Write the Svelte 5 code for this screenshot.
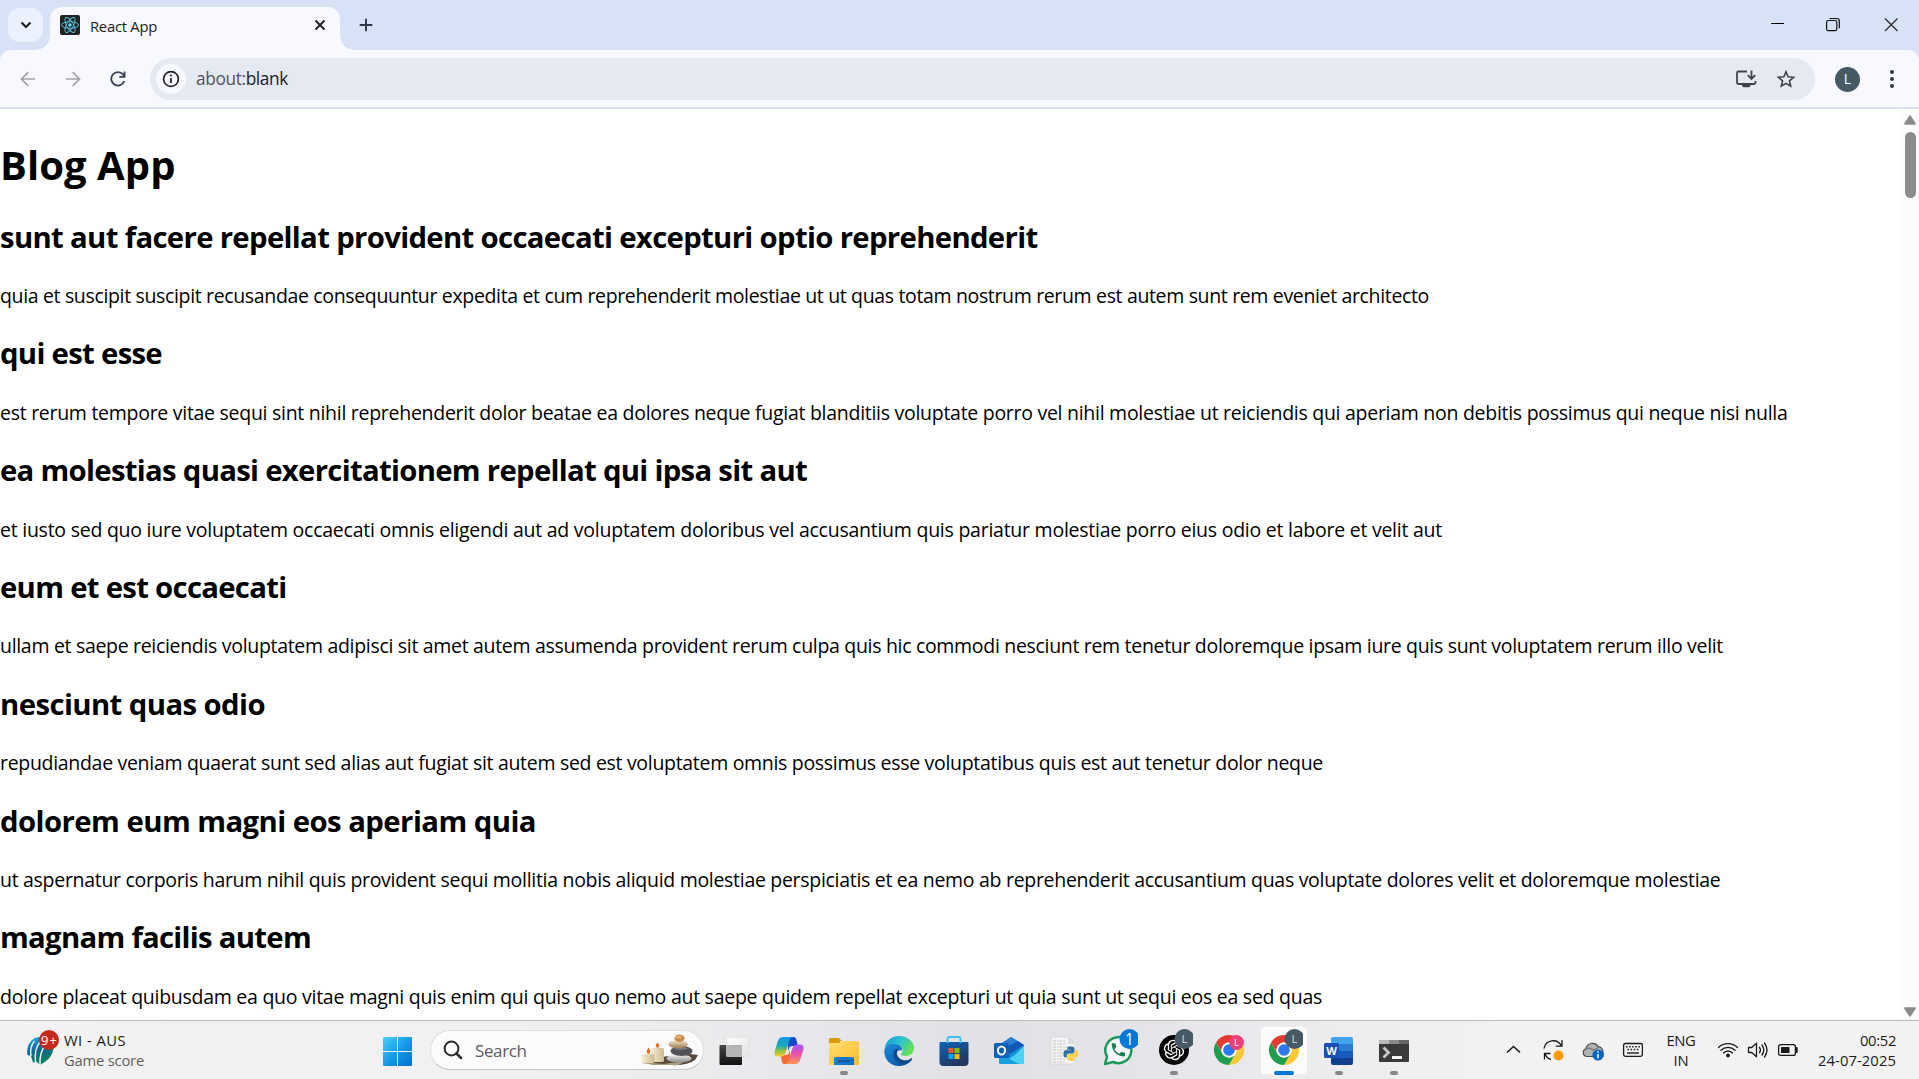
<script>
  const posts = [
    { title: 'sunt aut facere repellat provident occaecati excepturi optio reprehenderit', tw: 1037.5, body: 'quia et suscipit suscipit recusandae consequuntur expedita et cum reprehenderit molestiae ut ut quas totam nostrum rerum est autem sunt rem eveniet architecto', bw: 1429 },
    { title: 'qui est esse', tw: 162, body: 'est rerum tempore vitae sequi sint nihil reprehenderit dolor beatae ea dolores neque fugiat blanditiis voluptate porro vel nihil molestiae ut reiciendis qui aperiam non debitis possimus qui neque nisi nulla', bw: 1787.5 },
    { title: 'ea molestias quasi exercitationem repellat qui ipsa sit aut', tw: 807, body: 'et iusto sed quo iure voluptatem occaecati omnis eligendi aut ad voluptatem doloribus vel accusantium quis pariatur molestiae porro eius odio et labore et velit aut', bw: 1442 },
    { title: 'eum et est occaecati', tw: 286.5, body: 'ullam et saepe reiciendis voluptatem adipisci sit amet autem assumenda provident rerum culpa quis hic commodi nesciunt rem tenetur doloremque ipsam iure quis sunt voluptatem rerum illo velit', bw: 1723 },
    { title: 'nesciunt quas odio', tw: 265, body: 'repudiandae veniam quaerat sunt sed alias aut fugiat sit autem sed est voluptatem omnis possimus esse voluptatibus quis est aut tenetur dolor neque', bw: 1323 },
    { title: 'dolorem eum magni eos aperiam quia', tw: 536, body: 'ut aspernatur corporis harum nihil quis provident sequi mollitia nobis aliquid molestiae perspiciatis et ea nemo ab reprehenderit accusantium quas voluptate dolores velit et doloremque molestiae', bw: 1720.5 },
    { title: 'magnam facilis autem', tw: 311, body: 'dolore placeat quibusdam ea quo vitae magni quis enim qui quis quo nemo aut saepe quidem repellat excepturi ut quia sunt ut sequi eos ea sed quas', bw: 1322 }
  ];

  // Tracks a line of text so that it runs to the given width.
  function fit(node, width) {
    const natural = node.getBoundingClientRect().width;
    node.style.letterSpacing = `${(width - natural) / node.textContent.length}px`;
  }
</script>

{#snippet chromeLogo()}
  <circle cx="24" cy="24" r="24" fill="#fff" />
  <path d="M3.2 12A24 24 0 0 1 44.8 12H24A12 12 0 0 0 13.6 30Z" fill="#e33b2e" />
  <path d="M44.8 12A24 24 0 0 1 24 48L34.4 30A12 12 0 0 0 24 12Z" fill="#fcc934" />
  <path d="M24 48A24 24 0 0 1 3.2 12L13.6 30A12 12 0 0 0 34.4 30Z" fill="#1e9e4a" />
  <circle cx="24" cy="24" r="12" fill="#fff" />
  <circle cx="24" cy="24" r="9.3" fill="#2c78ee" />
{/snippet}

<div class="screen">
  <header class="tabs">
    <button class="tabsearch" aria-label="Search tabs">
      <svg width="12" height="8" viewBox="0 0 12 8"><path d="M1.5 1.5 6 6l4.500-4.500" fill="none" stroke="#1f2024" stroke-width="2.200" /></svg>
    </button>
    <div class="tab">
      <svg class="fav" width="20" height="20" viewBox="0 0 20 20">
        <rect width="20" height="20" rx="2" fill="#222" />
        <g fill="none" stroke="#58c4dc" stroke-width="0.9">
          <ellipse cx="10" cy="10" rx="8.500" ry="3.300" />
          <ellipse cx="10" cy="10" rx="8.500" ry="3.300" transform="rotate(60 10 10)" />
          <ellipse cx="10" cy="10" rx="8.500" ry="3.300" transform="rotate(120 10 10)" />
        </g>
        <circle cx="10" cy="10" r="1.700" fill="#61dafb" />
      </svg>
      <span class="tabname"><span use:fit={67}>React App</span></span>
      <svg class="tabclose" width="12" height="12" viewBox="0 0 12 12"><path d="M1.500 1.500l9 9M10.500 1.500l-9 9" stroke="#1f2024" stroke-width="1.900" /></svg>
    </div>
    <svg class="plus" width="14" height="14" viewBox="0 0 14 14"><path d="M7 .7v12.600M.7 7h12.600" stroke="#30394a" stroke-width="1.900" /></svg>
    <div class="win">
      <svg width="58" height="50" viewBox="0 0 58 50"><path d="M23 23.500h13" stroke="#000" /></svg>
      <svg width="58" height="50" viewBox="0 0 58 50"><g fill="none" stroke="#111" stroke-width="1.200"><rect x="20.600" y="20.500" width="10.200" height="10.200" rx="1.800" /><path d="M23.600 18.500h7.200a2.500 2.500 0 0 1 2.500 2.500v7.300" /></g></svg>
      <svg width="55" height="50" viewBox="0 0 55 50"><path d="M21 18.500l12.500 12.500M33.500 18.500l-12.500 12.500" stroke="#222" stroke-width="1.100" /></svg>
    </div>
  </header>

  <div class="toolbar">
    <div class="nav">
      <svg width="16" height="16" viewBox="0 0 16 16"><path d="M15 8H2M8.300 1.200 1.500 8l6.800 6.800" fill="none" stroke="#a1a3a9" stroke-width="1.700" /></svg>
      <svg width="16" height="16" viewBox="0 0 16 16"><path d="M1 8h13M7.700 1.200 14.500 8l-6.800 6.800" fill="none" stroke="#a1a3a9" stroke-width="1.700" /></svg>
      <svg width="16" height="16" viewBox="0 0 16 16"><path d="M14.300 10A6.700 6.700 0 1 1 13.200 3.700L14.500 5.500" fill="none" stroke="#3a4456" stroke-width="1.900" /><path d="M15.500.5v6.200H9.300V4.900h4.300V.5Z" fill="#3a4456" /></svg>
    </div>
    <div class="omnibox">
      <span class="info">
        <svg width="18" height="18" viewBox="0 0 18 18"><circle cx="9" cy="9" r="7.400" fill="none" stroke="#202124" stroke-width="1.700" /><path d="M9 8v5" stroke="#202124" stroke-width="1.700" /><circle cx="9" cy="5.500" r="1" fill="#202124" /></svg>
      </span>
      <span class="url"><span use:fit={92}><i>about:</i>blank</span></span>
      <svg class="install" width="22" height="20" viewBox="0 0 22 20"><path d="M12 2.500H3.500a1.500 1.500 0 0 0-1.500 1.500v9.500a1.500 1.500 0 0 0 1.500 1.500h15.500a1.500 1.500 0 0 0 1.500-1.500V12" fill="none" stroke="#41444b" stroke-width="1.800" /><path d="M7 15h8.500v2l-1.500 1.200H8.500L7 17Z" fill="#41444b" /><path d="M16.500 1.500v8M12.800 6.200l3.700 3.700 3.700-3.700" fill="none" stroke="#41444b" stroke-width="1.800" /></svg>
      <svg width="20" height="20" viewBox="0 0 20 20"><path d="M10 2.800l2.100 5 5.500.5-4.150 3.600 1.250 5.300L10 14.400l-4.700 2.800 1.250-5.300L2.400 8.300l5.500-.5Z" fill="none" stroke="#41444b" stroke-width="1.600" /></svg>
    </div>
    <span class="avatar">L</span>
    <svg class="dots" width="6" height="20" viewBox="0 0 6 20"><g fill="#30394a"><circle cx="3" cy="3" r="2" /><circle cx="3" cy="10" r="2" /><circle cx="3" cy="17" r="2" /></g></svg>
  </div>

  <div class="page">
    <main>
      <h1><span use:fit={175.5}>Blog App</span></h1>
      {#each posts as post}
        <h2><span use:fit={post.tw}>{post.title}</span></h2>
        <p><span use:fit={post.bw}>{post.body}</span></p>
      {/each}
    </main>
    <div class="scroll">
      <svg width="14" height="10" viewBox="0 0 14 10"><path d="M7 1.200 12 8.800H2Z" fill="#8b8b8b" stroke="#8b8b8b" stroke-width="1.800" stroke-linejoin="round" /></svg>
      <div class="thumb"></div>
      <svg class="down" width="14" height="10" viewBox="0 0 14 10"><path d="M7 8.800 12 1.200H2Z" fill="#8b8b8b" stroke="#8b8b8b" stroke-width="1.800" stroke-linejoin="round" /></svg>
    </div>
  </div>

  <footer>
    <div class="widget">
      <svg width="34" height="38" viewBox="0 0 34 38">
        <defs><linearGradient id="wg" x1="0" y1="0" x2="0.300" y2="1"><stop offset="0.1" stop-color="#12a5dc" /><stop offset="0.500" stop-color="#0a6896" /><stop offset="1" stop-color="#0a7d5c" /></linearGradient></defs>
        <path d="M14 8C5 8 0 17 1.500 26l3.500 1 2 6.500 4-.5 3 3 4-2.500c5-3 9-8.500 9.500-14.500V10Z" fill="url(#wg)" />
        <path d="M8.500 12c-3.500 4-4.500 9-3.500 15M14 13c-4.500 5-5.500 12-4.500 21M20 15c-5 6-6.500 12-6 21" fill="none" stroke="#eef5f7" stroke-width="1.500" />
        <circle cx="23" cy="11" r="10" fill="#c42b1c" />
        <text x="23" y="15.800" text-anchor="middle" font-size="13" fill="#fff" textLength="16">9+</text>
      </svg>
      <div class="wtext"><span><b use:fit={62}>WI - AUS</b></span><span class="sub"><b use:fit={80}>Game score</b></span></div>
    </div>

    <div class="start">
      <svg width="29" height="29" viewBox="0 0 29 29">
        <defs><linearGradient id="win" x1="0" y1="0" x2="29" y2="29" gradientUnits="userSpaceOnUse"><stop offset="0" stop-color="#4cd0fb" /><stop offset="0.500" stop-color="#149be6" /><stop offset="1" stop-color="#0270cc" /></linearGradient></defs>
        <path d="M1 0H14V14H0V1Q0 0 1 0ZM15 0H28Q29 0 29 1V14H15ZM0 15H14V29H1Q0 29 0 28ZM15 15H29V28Q29 29 28 29H15Z" fill="url(#win)" />
      </svg>
    </div>

    <div class="search">
      <svg width="20" height="20" viewBox="0 0 20 20"><circle cx="8.500" cy="8.500" r="6.900" fill="none" stroke="#2b2b2b" stroke-width="2" /><path d="M13.300 13.300l4.700 4.700" stroke="#2b2b2b" stroke-width="2.500" stroke-linecap="round" /></svg>
      <span class="stext"><span use:fit={51.500}>Search</span></span>
      <svg class="stones" width="60" height="32" viewBox="0 0 60 32">
        <defs>
          <linearGradient id="cn" x1="0" y1="0" x2="1" y2="0"><stop offset="0" stop-color="#f8eed4" /><stop offset="1" stop-color="#cdb990" /></linearGradient>
          <linearGradient id="st" x1="0" y1="0" x2="0" y2="1"><stop offset="0" stop-color="#f6ead4" /><stop offset="1" stop-color="#a07b50" /></linearGradient>
          <linearGradient id="ws" x1="0" y1="0" x2="0" y2="1"><stop offset="0" stop-color="#f3f3f3" /><stop offset="1" stop-color="#8b8b8c" /></linearGradient>
        </defs>
        <path d="M20 23l30-3 8 1-3 5q-8 6-24 5L1 29q8-2 19-6Z" fill="#594a3c" /><path d="M3 28l20 2 23-3-8 4H12Z" fill="#a89f7e" />
        <rect x="11" y="14" width="13" height="14" rx="1.500" fill="url(#cn)" /><rect x="1.500" y="20" width="13" height="9" rx="1.500" fill="url(#cn)" />
        <path d="M17.500 8.500q3.500 4 0 5.500-3.500-1.500 0-5.500M8.500 13.500q3.500 5 0 6.500-3.500-1.500 0-6.500" fill="#e96f23" />
        <ellipse cx="39" cy="24.500" rx="12.500" ry="4" fill="url(#ws)" />
        <ellipse cx="41.500" cy="17" rx="11" ry="5" fill="#505257" /><path d="M33 14.500q8-4 15 0-7 3-15 0" fill="#777a7e" />
        <ellipse cx="38" cy="10.200" rx="9.700" ry="4" fill="url(#st)" /><ellipse cx="39.500" cy="4.300" rx="5" ry="3.800" fill="#ca8c4b" /><ellipse cx="38.500" cy="3" rx="3" ry="1.500" fill="#e4af70" />
      </svg>
    </div>

    <nav class="apps">
      <div class="app">
        <svg width="30" height="30" viewBox="0 0 30 30">
          <defs><linearGradient id="tv" x1="0" y1="0" x2="0" y2="1"><stop offset="0" stop-color="#444745" /><stop offset="1" stop-color="#111" /></linearGradient><linearGradient id="tw" x1="0" y1="0" x2="1" y2="1"><stop offset="0" stop-color="#fff" /><stop offset="1" stop-color="#e3e3e3" /></linearGradient></defs>
          <rect x="0.500" y="9" width="22.500" height="20" rx="1" fill="url(#tv)" /><rect x="7.500" y="1.500" width="22" height="19" rx="1" fill="url(#tw)" stroke="#ddd" stroke-width="0.600" /><path d="M7.500 9H23v11.500H7.500Z" fill="#b5b5b6" />
        </svg>
      </div>
      <div class="app">
        <svg width="30" height="30" viewBox="0 0 30 30">
          <defs>
            <linearGradient id="c1" x1="0" y1="0" x2="0" y2="1"><stop offset="0" stop-color="#179ae6" /><stop offset="0.450" stop-color="#1aa7b5" /><stop offset="0.700" stop-color="#8bc34a" /><stop offset="1" stop-color="#ffd02f" /></linearGradient>
            <linearGradient id="c2" x1="0" y1="0" x2="0" y2="1"><stop offset="0" stop-color="#a45af2" /><stop offset="0.450" stop-color="#e74fb0" /><stop offset="1" stop-color="#ff9351" /></linearGradient>
            <linearGradient id="c3" x1="0" y1="0" x2="1" y2="1"><stop offset="0" stop-color="#0b53d5" /><stop offset="1" stop-color="#1b36bd" /></linearGradient>
          </defs>
          <path d="M14 1h5c3 0 3 2 4 5l1 4h-6c-3 0-3 3-4 5Z" fill="url(#c3)" />
          <path d="M16 28h-5c-3 0-3-2-3.500-4L6.500 19H12c3 0 3-3 4-5Z" fill="#f36d36" />
          <path d="M19 1H9C5 1 4 4 3 8L.7 15C-.3 19 1 20.500 4 20.500h3c3 0 4-2 5-5l3-10c1-3 2-4.500 4-4.500Z" fill="url(#c1)" />
          <path d="M11 28h10c4 0 5-3 6-7l2.300-7c1-4-.3-5.500-3.300-5.500h-3c-3 0-4 2-5 5l-3 10c-1 3-2 4.500-4 4.500Z" fill="url(#c2)" />
        </svg>
      </div>
      <div class="app">
        <svg width="32" height="30" viewBox="0 0 32 30">
          <defs><linearGradient id="fo" x1="0" y1="0" x2="1" y2="1"><stop offset="0" stop-color="#ffdf72" /><stop offset="1" stop-color="#fcba2c" /></linearGradient><linearGradient id="fb" x1="0" y1="0" x2="1" y2="0"><stop offset="0" stop-color="#1682d4" /><stop offset="1" stop-color="#0d6bbd" /></linearGradient></defs>
          <path d="M1 3q0-1 1-1h9l3 3h-2v5H1Z" fill="#dc9b0c" /><path d="M1 7h10l3-2h16q1 0 1 1v22q0 1-1 1H2q-1 0-1-1Z" fill="url(#fo)" />
          <path d="M6 29v-6q0-2 2-2h16q2 0 2 2v6Z" fill="url(#fb)" /><path d="M10 25h12" stroke="#0a4c91" stroke-width="1.500" />
        </svg>
        <span class="run"></span>
      </div>
      <div class="app">
        <svg width="30" height="30" viewBox="0 0 30 30">
          <defs><linearGradient id="e1" x1="0" y1="0" x2="1" y2="0.500"><stop offset="0.100" stop-color="#169bd9" /><stop offset="0.550" stop-color="#2fc3cd" /><stop offset="1" stop-color="#66df58" /></linearGradient><linearGradient id="e2" x1="0" y1="0" x2="0.800" y2="1"><stop offset="0" stop-color="#1a8ddc" /><stop offset="1" stop-color="#0c51a4" /></linearGradient></defs>
          <path d="M.5 14C1 5.500 7 0 15 0c9 0 15 6 15 12 0 5-4 8-8 8-4 0-5.500-1-5-2 2-2 2-4 1-6C14 6 3 7 .5 14Z" fill="url(#e1)" />
          <path d="M.3 15C1 9 6 7.500 11 8c5 .5 7.500 3.500 7 6.500-6-2-8 6-3 10 4 2.500 9 1.500 12-2 .8-.5 1.300 0 .8 1C25 27.500 20.500 30 15 30 6 30 0 23 .3 15Z" fill="url(#e2)" />
          <path d="M9.500 16c-1 7 4 12 11 12.800 3-1 6-3 7.300-5.300.5-1 0-1.500-.8-1-3 2.300-7.500 2.500-10.500.5C12 20 12 15.500 15 12.500c-3 0-5 1.500-5.500 3.500Z" fill="#114a8b" />
        </svg>
      </div>
      <div class="app">
        <svg width="30" height="30" viewBox="0 0 30 30">
          <defs><linearGradient id="ms" x1="0" y1="0" x2="0.500" y2="1"><stop offset="0" stop-color="#0d65b8" /><stop offset="1" stop-color="#22365e" /></linearGradient></defs>
          <path d="M.5 7q0-1 1-1h27q1 0 1 1v19q0 4-4 4h-21q-4 0-4-4Z" fill="url(#ms)" /><path d="M8.500 7V3q0-2 2-2h9q2 0 2 2v4" fill="none" stroke="#3fc2ef" stroke-width="2" />
          <path d="M9.500 12h5v5h-5Z" fill="#f35325" /><path d="M15.500 12h5v5h-5Z" fill="#81bc06" /><path d="M9.500 18h5v5h-5Z" fill="#05a6f0" /><path d="M15.500 18h5v5h-5Z" fill="#ffba08" />
        </svg>
      </div>
      <div class="app">
        <svg width="30" height="30" viewBox="0 0 30 30">
          <path d="M5 9 17 1l13 8v17q0 2-2 2H7q-2 0-2-2Z" fill="#1590df" /><path d="M5 9 17 1l6 3.500L7 14Z" fill="#2c7ed0" /><path d="M11 12 24 5l6 4-14 9Z" fill="#1557b5" /><path d="M30 10v16q0 2-2 2H8l14-10Z" fill="#4bd3f5" /><path d="M5 17l20 11H7q-2 0-2-2Z" fill="#189fdc" />
          <rect x="0" y="7" width="15" height="15" rx="1.500" fill="#0f60bd" /><ellipse cx="7.500" cy="14.500" rx="3.600" ry="4.100" fill="none" stroke="#fff" stroke-width="2" />
        </svg>
      </div>
      <div class="app">
        <svg width="30" height="30" viewBox="0 0 30 30">
          <path d="M2 1h17l7 7v20H2Z" fill="#f4f4f4" stroke="#cfcfcf" stroke-width="0.700" /><path d="M19 1v7h7Z" fill="#ddd" />
          <path d="M4 5h13M4 8h13M4 11h19M4 14h19M4 17h12M4 20h12M4 23h12M4 26h12" stroke="#bdbdbd" stroke-width="0.900" stroke-dasharray="3 1 1.500 .8" />
          <g transform="translate(14.500 10.500) scale(.61)">
            <path d="M14.250.18l.9.2.73.260.590.300.450.320.340.340.250.340.160.330.100.300.040.260.020.200-.010.130V8.500l-.050.630-.130.550-.210.460-.260.380-.300.310-.330.250-.350.190-.350.140-.330.100-.300.070-.260.040-.210.020H8.770l-.690.050-.590.140-.500.220-.410.270-.330.320-.270.350-.200.360-.150.370-.100.350-.070.320-.040.270-.020.210v3.060H3.170l-.210-.030-.280-.070-.320-.120-.350-.180-.360-.260-.360-.360-.350-.460-.320-.590-.280-.730-.210-.880-.140-1.050-.050-1.230.060-1.220.160-1.040.240-.870.320-.710.360-.570.400-.440.420-.330.420-.240.400-.160.360-.100.320-.050.240-.010h8.380v-.830H6.180l-.010-2.750-.020-.370.050-.340.110-.310.170-.280.250-.260.310-.230.380-.200.440-.180.510-.150.580-.120.640-.100.710-.060.770-.040.840-.020z" fill="#326f9f" />
            <path d="M9.750 22.820l-.9-.2-.730-.260-.590-.300-.450-.320-.340-.340-.250-.340-.260-.630-.080-.500V15.500l.180-1.180.470-.840.630-.560.680-.330 1.120-.230h6l1.280-.190.910-.490.600-.670.420-1.080.120-.800V6.070h2.270l.810.220.710.440.710.820.600 1.320.350 1.930.050 1.230-.220 2.260-.560 1.580-.760 1.010-.840.570-1.080.310H12.010v.830h5.810v2.750l-.140 1.020-.420.540-.690.430-.950.330-1.220.220-1.480.100z" fill="#f8cf46" />
          </g>
        </svg>
      </div>
      <div class="app">
        <svg class="tall" width="38" height="44" viewBox="0 0 38 44">
          <path d="M5 36 7 28.500A13 13 0 1 1 13 34Z" fill="#f6f6f6" stroke="#1d9a5b" stroke-width="2.500" stroke-linejoin="round" />
          <path transform="translate(9.500 13) scale(.74)" d="M6.620 10.790c1.440 2.830 3.760 5.140 6.590 6.590l2.200-2.200c.270-.270.670-.360 1.020-.240 1.120.370 2.330.570 3.570.570.550 0 1 .450 1 1V20c0 .550-.450 1-1 1-9.390 0-17-7.610-17-17 0-.550.450-1 1-1h3.500c.550 0 1 .450 1 1 0 1.250.200 2.450.570 3.570.110.350.030.740-.250 1.020l-2.200 2.200z" fill="#1d7f55" />
          <circle cx="29.500" cy="11" r="10" fill="#0078d7" /><text x="29.500" y="16.500" text-anchor="middle" font-size="15.500" fill="#fff">1</text>
        </svg>
      </div>
      <div class="app">
        <svg class="tall" width="38" height="44" viewBox="0 0 38 44">
          <circle cx="19" cy="22" r="15" fill="#050505" />
          <path transform="translate(8.800 11.800) scale(.85)" fill="#fff" d="M22.2819 9.8211a5.9847 5.9847 0 0 0-.5157-4.9108 6.0462 6.0462 0 0 0-6.5098-2.9A6.0651 6.0651 0 0 0 4.9807 4.1818a5.9847 5.9847 0 0 0-3.9977 2.9 6.0462 6.0462 0 0 0 .7427 7.0966 5.98 5.98 0 0 0 .511 4.9107 6.051 6.051 0 0 0 6.5146 2.9001A5.9847 5.9847 0 0 0 13.2599 24a6.0557 6.0557 0 0 0 5.7718-4.2058 5.9894 5.9894 0 0 0 3.9977-2.9001 6.0557 6.0557 0 0 0-.7475-7.0729zm-9.022 12.6081a4.4755 4.4755 0 0 1-2.8764-1.0408l.1419-.0804 4.7783-2.7582a.7948.7948 0 0 0 .3927-.6813v-6.7369l2.02 1.1686a.071.071 0 0 1 .038.052v5.5826a4.504 4.504 0 0 1-4.4945 4.4944zm-9.6607-4.1254a4.4708 4.4708 0 0 1-.5346-3.0137l.142.0852 4.783 2.7582a.7712.7712 0 0 0 .7806 0l5.8428-3.3685v2.3324a.0804.0804 0 0 1-.0332.0615L9.74 19.9502a4.4992 4.4992 0 0 1-6.1408-1.6464zM2.3408 7.8956a4.485 4.485 0 0 1 2.3655-1.9728V11.6a.7664.7664 0 0 0 .3879.6765l5.8144 3.3543-2.0201 1.1685a.0757.0757 0 0 1-.071 0l-4.8303-2.7865A4.504 4.504 0 0 1 2.3408 7.872zm16.5963 3.8558L13.1038 8.364 15.1192 7.2a.0757.0757 0 0 1 .071 0l4.8303 2.7913a4.4944 4.4944 0 0 1-.6765 8.1042v-5.6772a.79.79 0 0 0-.407-.667zm2.0107-3.0231l-.142-.0852-4.7735-2.7818a.7759.7759 0 0 0-.7854 0L9.409 9.2297V6.8974a.0662.0662 0 0 1 .0284-.0615l4.8303-2.7866a4.4992 4.4992 0 0 1 6.6802 4.66zM8.3065 12.863l-2.02-1.1638a.0804.0804 0 0 1-.038-.0567V6.0742a4.4992 4.4992 0 0 1 7.3757-3.4537l-.142.0805L8.704 5.459a.7948.7948 0 0 0-.3927.6813zm1.0976-2.3654l2.602-1.4998 2.6069 1.4998v2.9994l-2.5974 1.4997-2.6067-1.4997Z" />
          <circle cx="29.500" cy="11" r="10" fill="#455a64" /><text x="29.500" y="15" text-anchor="middle" font-size="11.500" fill="#d3dade">L</text>
        </svg>
        <span class="run"></span>
      </div>
      <div class="app">
        <svg class="tall" width="38" height="44" viewBox="0 0 38 44">
          <g transform="translate(4 7) scale(.625)">{@render chromeLogo()}</g>
          <circle cx="26.500" cy="14.500" r="7.500" fill="#ec407a" /><text x="26.500" y="18" text-anchor="middle" font-size="9.500" fill="#fff">L</text>
        </svg>
      </div>
      <div class="app">
        <div class="active"></div>
        <svg class="tall" width="38" height="44" viewBox="0 0 38 44">
          <g transform="translate(4 7) scale(.625)">{@render chromeLogo()}</g>
          <circle cx="29.500" cy="11" r="10" fill="#455a64" /><text x="29.500" y="15" text-anchor="middle" font-size="11.500" fill="#d3dade">L</text>
        </svg>
        <span class="run current"></span>
      </div>
      <div class="app">
        <svg width="30" height="30" viewBox="0 0 30 30">
          <path d="M7 3q0-2 2-2h18q2 0 2 2v5H7Z" fill="#41a5ee" /><path d="M7 8h22v7H7Z" fill="#2b7cd3" /><path d="M7 15h22v7H7Z" fill="#185abd" /><path d="M7 22h22v5q0 2-2 2H9q-2 0-2-2Z" fill="#103f91" />
          <rect x="0" y="7" width="15" height="15" rx="1.500" fill="#1851b3" /><text x="7.500" y="18.500" text-anchor="middle" font-size="11" font-weight="700" fill="#fff">W</text>
        </svg>
        <span class="run"></span>
      </div>
      <div class="app">
        <svg width="30" height="30" viewBox="0 0 30 30">
          <path d="M0 5q0-1 1-1h28q1 0 1 1v20q0 1-1 1H1q-1 0-1-1Z" fill="#3a3a3b" /><path d="M0 5q0-1 1-1h9v4H0Z" fill="#b9b9b9" /><path d="M10 4h10v4H10Z" fill="#8a8a8a" /><path d="M20 4h9q1 0 1 1v3H20Z" fill="#666" />
          <path d="M4.500 11.500l5 5-5 5" fill="none" stroke="#c9c9c9" stroke-width="2.800" /><path d="M13 21.500h10" stroke="#fff" stroke-width="2.800" />
        </svg>
        <span class="run"></span>
      </div>
    </nav>

    <div class="tray">
      <svg width="40" height="30" viewBox="0 0 40 30"><path d="M14 17.500l6.500-6 6.500 6" fill="none" stroke="#1b1b1b" stroke-width="1.600" /></svg>
      <svg width="40" height="30" viewBox="0 0 40 30"><path d="M11 13.500A9.300 9.300 0 0 1 28.500 11M29 5v6.200h-6.200M11.500 24.500v-6h6M12 19a9 9 0 0 0 6 5.500" fill="none" stroke="#1b1b1b" stroke-width="1.300" /><circle cx="25.500" cy="20.500" r="5" fill="#ff9800" /></svg>
      <svg width="40" height="30" viewBox="0 0 40 30"><path d="M15 21.500h-1a3.900 3.900 0 0 1-1-7.600 6.500 6.500 0 0 1 12-2.400q4.500.5 5 5.500v4.500Z" fill="#b3b3b3" stroke="#4b4b4b" stroke-width="1.200" /><path d="M13 14q4-2 7 1l7-3" fill="none" stroke="#777" stroke-width="1.200" /><circle cx="25" cy="20" r="5.600" fill="#0067c0" /><path d="M25 19v4.300M25 16.300v1.500" stroke="#fff" stroke-width="1.500" /></svg>
      <svg width="40" height="30" viewBox="0 0 40 30"><rect x="10.600" y="8.500" width="18.800" height="12.800" rx="1.800" fill="none" stroke="#1b1b1b" stroke-width="1.300" /><path d="M13 11.800h14M14.500 14.500h12" stroke="#1b1b1b" stroke-width="1.500" stroke-dasharray="1.500 1.600" /><path d="M14 18h12" stroke="#1b1b1b" stroke-width="1.400" /></svg>
      <div class="lang"><span use:fit={29}>ENG</span><span use:fit={15}>IN</span></div>
      <svg width="30" height="30" viewBox="0 0 30 30"><g fill="none" stroke="#1b1b1b" stroke-width="1.300" stroke-linecap="round"><path d="M5.500 12.500a13.500 13.500 0 0 1 19 0M8 15.300a10 10 0 0 1 14 0M10.500 18a6.300 6.300 0 0 1 9 0" /></g><circle cx="15" cy="20.500" r="1.900" fill="#1b1b1b" /></svg>
      <svg width="30" height="30" viewBox="0 0 30 30"><g fill="none" stroke="#1b1b1b" stroke-width="1.300" stroke-linejoin="round" stroke-linecap="round"><path d="M5.500 12.500h3.200l4.800-4.300v13.600l-4.800-4.300H5.500Z" /><path d="M16.500 12.300q2 2.700 0 5.400M19 10q3.600 5 0 10M21.500 8q5 7 0 14" /></g></svg>
      <svg width="30" height="30" viewBox="0 0 30 30"><rect x="5.600" y="9.600" width="16.800" height="10.800" rx="2.200" fill="none" stroke="#1b1b1b" stroke-width="1.300" /><rect x="8" y="12" width="8.500" height="6" rx=".6" fill="#1b1b1b" /><path d="M23.600 13v4" stroke="#1b1b1b" stroke-width="2.200" stroke-linecap="round" /></svg>
      <div class="clock"><span use:fit={36}>00:52</span><span use:fit={78}>24-07-2025</span></div>
    </div>
  </footer>
</div>

<style>
  :global(body) { margin: 0; background: #fff; overflow: hidden; }
  :global(*) { box-sizing: border-box; }
  .screen { width: 1919px; height: 1079px; display: flex; flex-direction: column; font-family: 'Open Sans', 'Noto Sans', sans-serif; color: #000; background: #fff; }
  span { white-space: nowrap; }
  svg { flex: none; display: block; }

  .tabs { height: 50px; flex: none; display: flex; align-items: center; background: #d8e2f7; padding-left: 8px; }
  .tabsearch { width: 35px; height: 34px; border: 0; border-radius: 12px; background: #ebf1ff; padding: 0; display: flex; align-items: center; justify-content: center; }
  .tab { position: relative; margin-left: 7px; width: 290px; height: 43px; align-self: flex-end; background: #f8f9ff; border-radius: 12px 12px 0 0; display: flex; align-items: center; padding: 0 14px 7px 10px; }
  .tab::before, .tab::after { content: ''; position: absolute; bottom: 0; width: 14px; height: 14px; }
  .tab::before { left: -14px; background: radial-gradient(circle at 0 0, transparent 13.5px, #f8f9ff 14px); }
  .tab::after { right: -14px; background: radial-gradient(circle at 100% 0, transparent 13.5px, #f8f9ff 14px); }
  .tabname { margin-left: 10px; padding-top: 1px; font-size: 14.800px; line-height: 20px; color: #202124; flex: 1; }
  .plus { margin-left: 19px; }
  .win { margin-left: auto; display: flex; }

  .toolbar { height: 59px; flex: none; display: flex; align-items: center; background: linear-gradient(#d8e2f7, #d8e2f7) top / 100% 12px no-repeat; position: relative; isolation: isolate; padding-bottom: 1px; }
  .toolbar::before { content: ''; position: absolute; inset: 0; z-index: -1; background: #f8f9ff; border-radius: 10px 10px 0 0; border-bottom: 2px solid #dde2ee; }
  .nav { display: flex; gap: 29px; padding-left: 20px; width: 150px; }
  .omnibox { width: 1665px; height: 42px; border-radius: 21px; background: #e5e9f2; display: flex; align-items: center; padding: 0 19.500px 0 6px; }
  .info { width: 30px; height: 30px; border-radius: 50%; background: #f8f9ff; display: flex; align-items: center; justify-content: center; }
  .url { flex: 1; margin-left: 10px; font-size: 17.300px; line-height: 24px; color: #202124; }
  .url i { font-style: normal; color: #50545c; }
  .install { margin-right: 19px; }
  .avatar { width: 25px; height: 25px; margin-left: 20px; border-radius: 50%; background: #455a64; color: #fff; font-size: 14px; line-height: 24px; text-align: center; }
  .dots { margin-left: 29px; }

  .page { flex: 1; min-height: 0; display: flex; }
  main { flex: 1; overflow: hidden; }
  h1, h2, p { white-space: nowrap; font-weight: 700; }
  h1 { font-size: 40px; line-height: 53px; margin: 29px 0 25.600px; }
  h2 { font-size: 29.300px; line-height: 40px; margin: 24.300px 0 25.500px; }
  p { font-size: 19.500px; line-height: 27px; margin: 25.500px 0 24.300px; font-weight: 400; }
  .scroll { width: 18px; background: #fcfcfc; display: flex; flex-direction: column; align-items: center; padding: 6px 0 3px; }
  .thumb { width: 11px; height: 66px; margin-top: 7px; border-radius: 6px; background: #8b8b8b; }
  .down { margin-top: auto; }

  footer { height: 59px; flex: none; display: flex; align-items: center; border-top: 1px solid #b7b7b9; background: linear-gradient(90deg, #f2f2f2 0, #f1f0f2 25%, #ebebee 37%, #e2e1e6 50%, #e4e3e8 58%, #ececef 68%, #f2f2f2 78%); color: #1b1b1b; font-size: 14.800px; line-height: 20px; }
  .widget { width: 370px; display: flex; align-items: center; padding-left: 26px; }
  .widget svg { margin-top: -5px; }
  .wtext { display: flex; flex-direction: column; margin-left: 4px; }
  .wtext b { font-weight: 400; }
  .sub { color: #606060; }
  .start { width: 54px; display: flex; justify-content: center; padding-top: 2px; }
  .search { width: 274px; height: 40px; margin: 0 2.500px 0 6px; border: 1px solid #dedee0; border-bottom-color: #c7c7c9; border-radius: 20px; background: #fbfbfc; display: flex; align-items: center; padding: 0 3px 0 12px; }
  .stext { flex: 1; margin-left: 12px; font-size: 17px; color: #5c5c5c; padding-top: 1px; }
  .apps { display: flex; height: 58px; }
  .app { position: relative; width: 55px; height: 58px; display: flex; justify-content: center; padding-top: 15px; }
  .app svg { position: relative; }
  .app .tall { margin-top: -8px; }
  .run { position: absolute; bottom: 4px; left: 23.500px; width: 8px; height: 4px; border-radius: 2px; background: #868689; }
  .run.current { left: 17.500px; width: 20px; background: #0078d4; }
  .active { position: absolute; left: 3.500px; top: 5px; width: 48px; height: 49px; border-radius: 5px; background: #fbfbfc; border: 1px solid #ededf0; }
  .tray { margin-left: 71.500px; display: flex; align-items: center; flex: 1; padding-right: 23px; }
  .lang { width: 56px; margin-right: 4px; display: flex; flex-direction: column; align-items: center; }
  .clock { margin-left: auto; display: flex; flex-direction: column; align-items: flex-end; }
</style>
